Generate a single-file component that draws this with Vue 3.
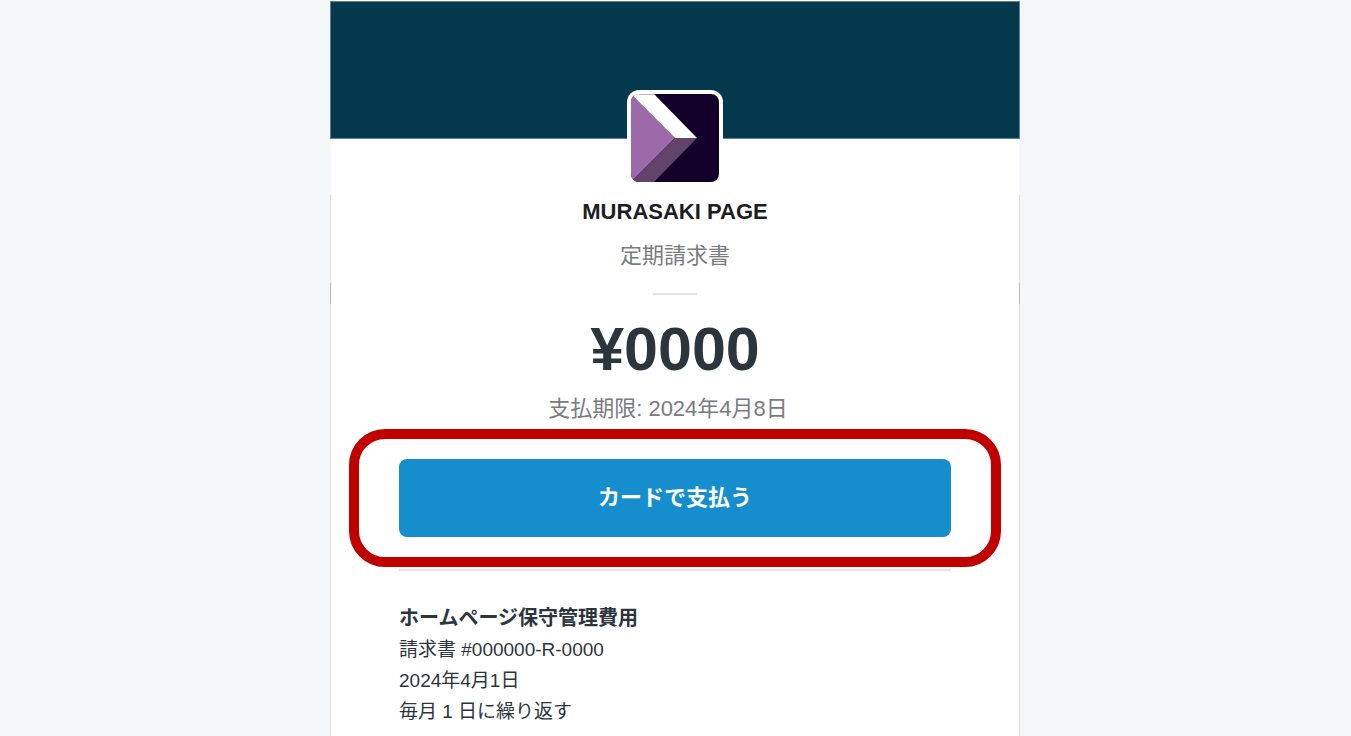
<script setup>
const invoice = {
  merchant: 'MURASAKI PAGE',
  kind: '定期請求書',
  amount: '¥0000',
  due: '支払期限: 2024年4月8日',
  title: 'ホームページ保守管理費用',
  lines: ['請求書 #000000-R-0000', '2024年4月1日', '毎月 1 日に繰り返す'],
}
</script>

<template>
  <main class="page">
    <article class="card">
      <header class="banner">
        <div class="logo">
          <svg viewBox="0 0 88 88" role="img" aria-label="MURASAKI PAGE">
            <rect width="88" height="88" fill="#12002b" />
            <path d="M0 0L0 88L3 85L44 44Z" fill="#9c69a9" />
            <path d="M0 0H23L66 44H44Z" fill="#fff" />
            <path d="M44 44H66L23 88H0Z" fill="#63426b" />
            <path d="M8 0.5H80" stroke="#12002b" stroke-opacity="0.3" />
          </svg>
        </div>
      </header>

      <section class="summary">
        <h1 class="merchant">{{ invoice.merchant }}</h1>
        <p class="kind">{{ invoice.kind }}</p>
        <hr class="short-rule" />
        <p class="amount">{{ invoice.amount }}</p>
        <p class="due">{{ invoice.due }}</p>
      </section>

      <div class="action">
        <button type="button" class="pay">カードで支払う</button>
        <span class="highlight" aria-hidden="true"></span>
      </div>

      <section class="details">
        <h2 class="title">{{ invoice.title }}</h2>
        <p v-for="line in invoice.lines" :key="line" class="line">{{ line }}</p>
      </section>
    </article>
  </main>
</template>

<style>
body {
  margin: 0;
  background: #f4f6f8;
}
</style>

<style scoped>
.page {
  display: flex;
  justify-content: center;
  box-sizing: border-box;
  min-height: 100vh;
  padding-right: 1px;
  font-family: "Liberation Sans", "Noto Sans CJK JP", sans-serif;
  color: #2c353c;
}

.card {
  --edge: linear-gradient(#f4f6f8 195px, #dedede 195px 283px, #b9b9b9 283px 304px, #dedede 304px);
  box-sizing: border-box;
  width: 100%;
  max-width: 690px;
  padding: 1px 1px 0;
  background:
    var(--edge) left / 1px 100% no-repeat,
    var(--edge) right / 1px 100% no-repeat,
    #fff;
}

.banner {
  display: flex;
  justify-content: center;
  align-items: flex-end;
  box-sizing: border-box;
  height: 138px;
  margin: 0 -1px;
  border: 1px solid #60818e;
  background: #04384c;
}

.logo {
  box-sizing: border-box;
  width: 96px;
  height: 96px;
  margin-bottom: -48px;
  padding: 4px;
  border-radius: 12px;
  background: #fff;
}

.logo svg {
  display: block;
  width: 88px;
  height: 88px;
  border-radius: 8px;
}

.summary {
  padding-top: 57px;
  text-align: center;
}

.merchant,
.kind,
.due {
  margin: 0;
  font-size: 22px;
  line-height: 32px;
}

.merchant {
  color: #1c1d22;
}

.kind {
  margin-top: 12px;
  color: #7a7b7f;
}

.short-rule {
  width: 44px;
  height: 2px;
  margin: 21px auto 0;
  border: 0;
  background: #e3e3e3;
}

.amount {
  margin: 18px 0 0;
  font-size: 61px;
  font-weight: 700;
  line-height: 72px;
}

.due {
  margin-top: 8px;
  padding-right: 14px;
  color: #7a7b7f;
}

.action {
  position: relative;
  margin: 34px 68px 0;
}

.pay {
  display: block;
  width: 100%;
  height: 78px;
  padding: 0 0 6px;
  border: 0;
  border-radius: 8px;
  background: #168ecd;
  color: #fff;
  font-family: inherit;
  font-size: 22px;
  font-weight: 700;
  cursor: pointer;
}

.highlight {
  position: absolute;
  inset: -30px -50px;
  border: 10px solid #c00000;
  border-radius: 36px;
  pointer-events: none;
}

.details {
  margin: 32px 68px 0;
  padding-top: 32px;
  border-top: 2px solid #e6e6e6;
}

.title,
.line {
  margin: 0;
  line-height: 31px;
}

.title {
  font-size: 20px;
}

.line {
  font-size: 19px;
}
</style>
